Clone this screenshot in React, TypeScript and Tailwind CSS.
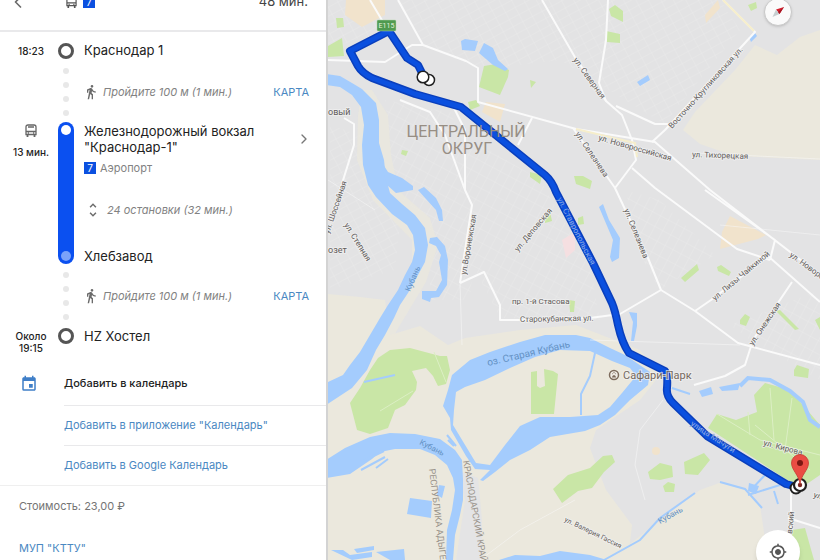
import { MdDirectionsWalk, MdEvent, MdMyLocation, MdUnfoldMore } from "react-icons/md";
import { ChevronLeft, ChevronRight } from "lucide-react";

const BusIcon = ({ className }: { className?: string }) => (
  <svg viewBox="0 0 12 14" className={className} fill="none" stroke="currentColor">
    <path d="M1 3Q1 1 3 1H9Q11 1 11 3V10.500H1ZM1 7.500H11M3 3H9" strokeWidth="1.300" />
    <path d="M2.500 10.500V13M9.500 10.500V13" strokeWidth="1.800" />
    <path d="M2.800 9H4M8 9H9.200" strokeWidth="1.300" />
  </svg>
);

const RouteBadge = () => (
  <span className="flex h-3 w-3 items-center justify-center bg-[#0b50e0] text-[10px] leading-3 text-white">7</span>
);

const Dots = () => (
  <div className="flex flex-col items-center justify-center gap-2">
    {[0, 1, 2, 3].map((dot) => (
      <span key={dot} className="h-[6px] w-[6px] rounded-full bg-[#e8e8e8]" />
    ))}
  </div>
);

const StopRing = () => <span className="block h-4 w-4 rounded-full border-[3px] border-[#555555] bg-white" />;

const WalkContent = () => (
  <div className="flex items-center pl-[9px] pr-[17px]">
    <MdDirectionsWalk className="h-4 w-4 text-[#6b6b6b]" />
    <span className="ml-1 text-[11px] italic text-[#828282]">Пройдите 100 м (1 мин.)</span>
    <a href="#map" className="ml-auto text-[11px] text-[#4a88c2]">КАРТА</a>
  </div>
);

const Directions = () => {
  return (
    <aside className="w-2/5 shrink-0 overflow-hidden border-r-2 border-[#d3d3d3] bg-white font-['Inter','Liberation_Sans',sans-serif] text-[#222222]">
      <header className="h-8 overflow-hidden border-b-2 border-[#e9e9eb]">
        <div className="-mt-2 flex h-5 items-center pl-2 pr-[18px]">
          <button aria-label="Назад">
            <ChevronLeft className="h-5 w-5 text-[#6b6b6b]" strokeWidth={2} />
          </button>
          <BusIcon className="ml-[38px] mr-[6px] h-[13px] w-[11px] text-[#555555]" />
          <RouteBadge />
          <span className="ml-auto text-[13px] text-[#444444]">48 мин.</span>
        </div>
      </header>

      <ol className="pt-2">
        <li className="grid h-[22px] grid-cols-[58px_16px_1fr] items-center">
          <time className="pl-1 text-center text-[10px] font-medium">18:23</time>
          <StopRing />
          <h2 className="pl-[10px] text-[13px]">Краснодар 1</h2>
        </li>
        <li className="grid h-[60px] grid-cols-[58px_16px_1fr]">
          <span />
          <Dots />
          <WalkContent />
        </li>
        <li className="grid h-[142px] grid-cols-[58px_16px_1fr]">
          <div className="flex flex-col items-center gap-2 pl-1 pt-[2px]">
            <BusIcon className="h-[14px] w-3 text-[#666666]" />
            <span className="whitespace-nowrap text-[10px] font-medium leading-3">13 мин.</span>
          </div>
          <div className="flex flex-col items-center justify-between rounded-full bg-[#0b50f0] py-[3px]">
            <span className="h-[10px] w-[10px] rounded-full bg-white" />
            <span className="h-[10px] w-[10px] rounded-full bg-[#7aa2fa]" />
          </div>
          <div className="flex flex-col pl-[10px]">
            <div className="flex items-center pr-[14px] pt-px">
              <h2 className="text-[13px] leading-4">
                Железнодорожный вокзал
                <br />
                "Краснодар-1"
              </h2>
              <button aria-label="Подробнее" className="ml-auto">
                <ChevronRight className="h-4 w-4 text-[#777777]" />
              </button>
            </div>
            <div className="mt-[5px] flex items-center gap-1 text-[11px] leading-4 text-[#828282]">
              <RouteBadge />
              Аэропорт
            </div>
            <button className="mt-[25px] flex items-center gap-[5px] text-[11px] italic leading-4 text-[#828282]">
              <MdUnfoldMore className="h-[18px] w-[18px] text-[#6b6b6b]" />
              24 остановки (32 мин.)
            </button>
            <h2 className="mt-auto text-[13px] leading-4">Хлебзавод</h2>
          </div>
        </li>
        <li className="grid h-16 grid-cols-[58px_16px_1fr]">
          <span />
          <Dots />
          <WalkContent />
        </li>
        <li className="grid grid-cols-[58px_16px_1fr]">
          <time className="pl-1 pt-[2px] text-center text-[10px] font-medium leading-3">
            Около
            <br />
            19:15
          </time>
          <StopRing />
          <h2 className="pl-[10px] text-[13px] leading-4">HZ Хостел</h2>
        </li>
      </ol>

      <section className="pt-2 text-[11px]">
        <div className="flex h-[43px] items-center">
          <MdEvent className="ml-5 mr-[26px] h-[18px] w-[18px] text-[#3f7fc8]" />
          <h3 className="font-medium">Добавить в календарь</h3>
        </div>
        <div className="ml-16 flex h-10 items-center border-t border-[#e9e9eb]">
          <a href="#calendar" className="text-[#4a88c2]">Добавить в приложение "Календарь"</a>
        </div>
        <div className="ml-16 flex h-10 items-center border-t border-[#e9e9eb]">
          <a href="#google" className="text-[#4a88c2]">Добавить в Google Календарь</a>
        </div>
      </section>
      <footer className="border-t border-[#efefef] pl-[19px] text-[11px] leading-4 text-[#757575]">
        <p className="pt-3">Стоимость: 23,00 ₽</p>
        <a href="#operator" className="mt-[26px] block text-[#4a88c2]">МУП "КТТУ"</a>
      </footer>
    </aside>
  );
};

type Label = { text: string; x: number; y: number; angle?: number; size?: number; color?: string };

const labels: Label[] = [
  { text: "ул. Северная", x: 573, y: 60, angle: 54 },
  { text: "Восточно-Кругликовская ул.", x: 672, y: 129, angle: -48 },
  { text: "ул. Новороссийская", x: 598, y: 140, angle: 16 },
  { text: "ул. Тихорецкая", x: 692, y: 157, angle: 2 },
  { text: "ул. Селезнева", x: 575, y: 134, angle: 56 },
  { text: "ул. Селезнева", x: 624, y: 210, angle: 68 },
  { text: "ул. Деповская", x: 518, y: 252, angle: -50 },
  { text: "ул.Воронежская", x: 466, y: 275, angle: -80 },
  { text: "ул. Шоссейная", x: 329, y: 234, angle: -71 },
  { text: "ул. Степная", x: 344, y: 225, angle: 58 },
  { text: "пр. 1-й Стасова", x: 512, y: 304 },
  { text: "Старокубанская ул.", x: 520, y: 322, angle: -1 },
  { text: "ул. Лизы Чайкиной", x: 715, y: 301, angle: -40 },
  { text: "ул. Новороссийская", x: 789, y: 256, angle: 36 },
  { text: "ул. Онежская", x: 753, y: 346, angle: -56 },
  { text: "ул. Кирова", x: 763, y: 445, angle: 15 },
  { text: "вский", x: 792, y: 534, angle: -84 },
  { text: "ул. Валерия Гассия", x: 564, y: 521, angle: 26, size: 7 },
  { text: "ул.", x: 813, y: 497, angle: 18 },
  { text: "овый", x: 328, y: 115, size: 9 },
  { text: "озет", x: 328, y: 253, size: 9 },
  { text: "Кубань", x: 410, y: 292, angle: -67, color: "#6391c4" },
  { text: "Кубань", x: 419, y: 444, angle: 27, color: "#6391c4" },
  { text: "Кубань", x: 660, y: 524, angle: -29, color: "#6391c4" },
  { text: "оз. Старая Кубань", x: 488, y: 366, angle: -13, size: 10, color: "#6391c4" },
  { text: "РЕСПУБЛИКА АДЫГЕЯ", x: 429, y: 469, angle: 83, size: 9, color: "#98928a" },
  { text: "КРАСНОДАРСКИЙ КРАЙ", x: 463, y: 461, angle: 80, size: 9, color: "#98928a" },
];

const routePath =
  "M424 77L418 65L407 58L399 46L389 31L350 51L358 66Q362 73 372 78L415 94L461 107L545 175Q552 181 556 192L593 263L612 303Q615 310 618 325Q622 343 629 353L665 371Q668 374 667 388Q666 396 673 403L707 436L786 484L797 487";

const CityMap = () => {
  return (
    <svg
      viewBox="328 0 492 560"
      preserveAspectRatio="xMidYMid slice"
      className="absolute inset-0 h-full w-full font-['Roboto','Liberation_Sans',sans-serif]"
      role="img"
      aria-label="Карта маршрута"
    >
      <defs>
        <pattern id="blocks" width="11" height="8" patternUnits="userSpaceOnUse" patternTransform="rotate(-28)">
          <path d="M0 0H11M0 0V8" stroke="#e9e9ea" strokeWidth="1" fill="none" />
        </pattern>
        <pattern id="blocksSteep" width="9" height="12" patternUnits="userSpaceOnUse" patternTransform="rotate(28)">
          <path d="M0 0H9M0 0V12" stroke="#e9e9ea" strokeWidth="1" fill="none" />
        </pattern>
      </defs>
      <rect x="-600" y="-400" width="2400" height="1600" fill="#e3e3e4" />

      {/* residential blocks */}
      <path d="M398 0H720L740 30L664 124L560 60L480 70L425 45ZM328 0H370L385 28L328 50ZM330 125L360 135L366 185L400 225L395 270L330 290Z" fill="url(#blocks)" />
      <path d="M432 115L540 180L590 265L600 320L500 318L470 260L462 200L440 160ZM625 190L660 200L715 255L660 290L645 265ZM730 325L820 290V380L750 340ZM385 100L450 112L480 180L470 300H430V220L395 195Z" fill="url(#blocksSteep)" />

      {/* open country */}
      <g fill="#ebe8dd">
        <path d="M328 294L360 297L385 300L390 335L420 326L448 345L465 338L520 330L576 325L640 350L660 375L640 400L596 430L590 448L606 490L632 525L628 560H328Z" />
        <path d="M755 45L777 55L800 37L820 30V160L735 156L700 144L683 130L695 112L735 70Z" />
        <path d="M610 560L660 520L700 490L722 482L745 490L760 505L768 560Z" />
      </g>
      <path d="M457 470L478 478L482 520V560H456L465 500Z" fill="#e4e4e5" />
      <path d="M362 90L372 90L388 115L391 155L398 190L430 218L438 245L426 282L400 325L376 368L366 370L412 270L412 240L373 200L357 160L358 115Z" fill="#ebe8dd" opacity=".7" />
      <g fill="#f1e3cc">
        <path d="M346 0H385V15L362 27L345 15ZM486 102L505 104L500 122L482 112ZM730 216L766 235L758 239L720 249L722 232ZM705 15L718 0L720 8L706 23Z" />
        <circle cx="656" cy="451" r="4" />
      </g>
      <path d="M562 240L575 232V250L566 258Z" fill="#f5dfe1" />

      {/* parks */}
      <g fill="#c9e6a6">
        <path d="M350 403L360 388L370 370L378 358L390 350L410 348L440 356L447 356L450 370L446 384L438 386L433 376L426 368L412 371L417 382L416 390L405 405L395 410L388 428L370 434L357 430Z" />
        <path d="M531 372L537 371L537 386L540 388L545 386L544 369L553 371L558 374L554 414H531Z" />
        <path d="M484 66L496 64L509 70L508 77L500 95L479 87Z" />
        <path d="M328 46L342 38L344 56L328 57ZM336 18L343 18L344 27L337 28Z" />
        <path d="M609 9L615 5L623 11L623 22L611 16ZM606 31L620 34L620 43L607 42ZM574 176L583 176L592 181L590 189L576 184ZM468 102L476 100L480 106L470 110ZM530 172L542 175L540 184L530 177Z" />
        <path d="M681 278L697 264L699 270L685 282ZM717 267L721 265L731 272L729 276L718 271ZM740 320L745 314L750 317L746 326L740 324ZM794 370L797 365L809 369L808 378L794 376ZM776 311L780 310L799 329L795 330ZM748 5L756 2L757 8L751 11Z" />
        <path d="M553 489L568 475L590 468L603 456L612 455L615 462L604 472L592 488L578 491L562 503Z" />
        <path d="M717 414L736 420L757 412L754 395L765 383L790 390L820 425V475L801 488L784 478L708 428Z" />
        <path d="M648 472L660 463L672 466L673 477L660 480L650 479ZM684 462L704 453L710 460L698 475L685 474ZM663 486L668 482L675 484L674 492L665 492ZM792 530L805 528L814 560H792ZM569 300L575 301L574 312H570Z" />
        <path d="M545 216L550 212L552 221L545 223ZM578 218L583 216L584 224L578 225ZM530 80L536 82L531 88ZM402 150L408 151L406 156L401 154ZM815 320L820 317V330Z" />
      </g>
      <g stroke="#dcefc4" fill="none">
        <path d="M380 411L413 391M434 352L446 382M717 414L760 440L820 455M748 412L750 435M770 388L774 440M792 398L785 450M755 425L810 470" />
      </g>

      {/* water */}
      <g fill="#a4ccfd">
        <path d="M326 74L340 76L352 83L362 89L376 103L379 120L379 143L384 160L386 178L390 193L402 204L415 215L425 228L428 245L425 262L418 275L408 293L400 305L394 318L385 335L376 350L367 370L352 388L326 405V383L343 375L350 365L360 352L370 335L380 318L388 305L398 290L405 275L412 262L415 250L413 235L407 225L392 214L376 197L368 185L363 165L362 145L364 125L361 107L352 95L340 87L326 85Z" />
        <path d="M326 460L345 448L370 437L390 433L415 434L440 439L455 450L462 460L463 480V500L460 515L455 535L453 560H446L447 530L452 510L455 490L453 478L447 465L435 455L420 449L395 449L380 452L372 459L350 474L326 478Z" />
        <path fillRule="evenodd" d="M451 430L450 418L443 406L448 390L452 375L470 360L490 352L520 342L545 335L576 335L590 338L610 348L625 355L650 372L648 385L630 400L615 415L600 425L585 431L550 437L530 450L510 460L495 472L483 481L480 480L490 470L475 469L466 456ZM453 425L454 410L456 392L465 387L485 380L510 368L535 357L560 350L590 351L612 361L630 368L636 376L622 393L610 407L598 415L570 417L540 417L520 426L505 445L490 465L476 463Z" />
        <path d="M379 158L388 172L402 178L413 186L413 190L396 193L387 185ZM418 190L424 187L436 198L442 210L443 221L439 221L436 210L426 199ZM430 238L437 237L445 246L448 260L447 285L439 297L431 298L430 302L422 299V291L436 291L442 280L439 262L441 255L436 246L429 243Z" />
        <path d="M461 41L465 39L478 41L475 51L462 50ZM479 53L484 43L493 48L498 60L508 69L505 71L493 65Z" />
        <path d="M599 207L603 204L609 220L620 238L619 258L612 262L610 257L613 240ZM629 312L637 313L637 326L634 341L631 341L633 322ZM637 82L648 75L650 80L640 86Z" />
        <path d="M410 498L432 501L431 518L407 514ZM439 485L445 486L442 498L437 495ZM376 552L404 549L405 560H390ZM354 549L374 546L374 550L357 553ZM331 550L343 550L350 555L372 552V557L352 560ZM499 560L515 555L540 556L560 551L590 555L607 560Z" />
        <path d="M749 37L755 33L757 36L751 42ZM699 391L711 387L713 394L702 397ZM719 387L740 383L738 390L722 391ZM749 483L759 486L756 494L748 491Z" />
      </g>
      <g stroke="#a4ccfd" fill="none">
        <path d="M740 386L748 378L770 380L790 391L803 402L810 420L820 427" strokeWidth="4" />
        <path d="M672 388L690 394M595 353L590 376L581 394V415" strokeWidth="2" />
        <path d="M604 560L640 540L660 518L695 493M720 482L745 489L762 508M750 491L765 475L780 478M748 495L780 485M774 491L778 504" strokeWidth="2" />
        <path d="M361 462L384 451M361 470L385 457M376 468L388 459M447 435L456 446M448 440L454 446M364 382L395 375" strokeWidth="2" />
      </g>

      {/* roads */}
      <g stroke="#fafafa" fill="none" strokeLinejoin="round">
        <path d="M370 0L386 27M398 0L423 45L412 45L385 62L328 60M423 45L466 61L478 68L478 102L576 129L655 142L710 190L820 275M542 0L576 59L606 101L622 115L632 140L636 160L615 188L573 128M705 190L775 240L770 260" strokeWidth="2" />
        <path d="M608 0L606 40L599 83L606 101M616 106L655 124H668M652 142L665 130L755 32L723 0M632 168L655 188L737 249L770 260M615 188L648 258L661 290L695 311L738 343L820 365M661 290L620 314L590 318L520 320H500V305L484 272L460 283" strokeWidth="2" />
        <path d="M695 311L711 300L768 256L820 302M792 282L753 340L745 365L725 376L694 385M460 283L472 205L465 190V130L450 100M400 100L430 112L445 135L465 190M344 118L354 124L354 145L340 190M532 118L518 145M791 486V530M788 518L820 528" strokeWidth="2" />
        <path d="M663 400L640 430L635 465L645 500M328 180L375 210M460 283L462 345M590 340L740 345M480 560L520 530L575 500M695 153L820 159M720 225L820 235" opacity=".5" />
      </g>
      <path d="M723 0L754 31M576 129L635 143L637 157" stroke="#f6eecb" strokeWidth="2" fill="none" />

      {/* transit route */}
      <g fill="none" strokeLinecap="round" strokeLinejoin="round">
        <path d={routePath} stroke="#0a3fbc" strokeWidth="8" />
        <path d={routePath} stroke="#0b50df" strokeWidth="5" />
      </g>
      <g fill="#8fa9e0" fontSize="8">
        <text transform="translate(557 199) rotate(63)">ул. Ставропольская</text>
        <text transform="translate(690 425) rotate(33)">улица Мачуги</text>
      </g>

      <g stroke="#f2f2f2" strokeWidth="2" paintOrder="stroke" strokeLinejoin="round">
        {labels.map((label, index) => (
          <text
            key={index}
            transform={`translate(${label.x} ${label.y}) rotate(${label.angle ?? 0})`}
            fontSize={label.size ?? 8}
            fill={label.color ?? "#625c5a"}
            strokeOpacity={label.color ? 0 : 0.7}
          >
            {label.text}
          </text>
        ))}
      </g>
      <g fill="#978e84" fontSize="16" textAnchor="middle">
        <text x="466" y="137">ЦЕНТРАЛЬНЫЙ</text>
        <text x="467" y="154">ОКРУГ</text>
      </g>

      <g>
        <circle cx="614" cy="375" r="4.500" fill="#f0ece5" stroke="#7d6b5c" strokeWidth="1.500" />
        <path d="M611.800 377.500Q612.500 375 614 375T616.200 377.500Z" fill="#7d6b5c" />
        <path d="M612 373.700H612.500M613.500 372.700H614.500M615.500 373.700H616" stroke="#7d6b5c" strokeWidth="1.200" />
        <text x="623" y="379" fontSize="11" fill="#75695f" stroke="#f2f2f2" strokeOpacity=".7" strokeWidth="2" paintOrder="stroke">Сафари-Парк</text>
      </g>
      <rect x="377" y="20" width="19" height="11" rx="1" fill="#4f9a50" stroke="#b5d5ad" strokeWidth=".5" />
      <text x="386.500" y="28" fontSize="7" fill="#e5f3df" textAnchor="middle">E115</text>

      {/* stop markers and destination pin */}
      <g fill="#ffffff" stroke="#202020" strokeWidth="1.500">
        <circle cx="429" cy="80" r="5.500" />
        <circle cx="423" cy="77" r="5.800" />
        <circle cx="796" cy="488" r="5.500" strokeWidth="2" />
        <circle cx="800" cy="485" r="6" strokeWidth="2.200" />
      </g>
      <circle cx="800" cy="485" r="2.200" fill="#7b2621" />
      <path d="M800 484C799 475 791.500 470 791.500 463A8.500 8.500 0 0 1 808.500 463C808.500 470 801 475 800 484Z" fill="#ea4c43" stroke="#c73b34" strokeWidth=".8" />
      <circle cx="800" cy="463" r="3" fill="#7b1712" />
    </svg>
  );
};

const App = () => {
  return (
    <main className="flex min-h-screen overflow-hidden">
      <Directions />
      <section id="map" className="relative flex-1 overflow-hidden">
        <CityMap />
        <button
          aria-label="Компас"
          className="absolute -top-[2px] right-7 flex h-7 w-7 items-center justify-center rounded-full border border-[#c9c9c9] bg-[#fafafa] shadow"
        >
          <svg viewBox="0 0 16 16" className="h-4 w-4">
            <path d="M14 3L9.500 10L8 8L6 5.500Z" fill="#d3202f" />
            <path d="M2.500 13L6 5.500L8 8L9.500 10Z" fill="#c6ced0" />
            <path d="M14 3L8 8L9.500 10Z" fill="#a61623" />
          </svg>
        </button>
        <button
          aria-label="Моё местоположение"
          className="absolute -bottom-[14px] right-5 flex h-11 w-11 items-center justify-center rounded-full bg-white shadow-md"
        >
          <MdMyLocation className="h-[18px] w-[18px] text-[#555555]" />
        </button>
      </section>
    </main>
  );
};

export default App;
